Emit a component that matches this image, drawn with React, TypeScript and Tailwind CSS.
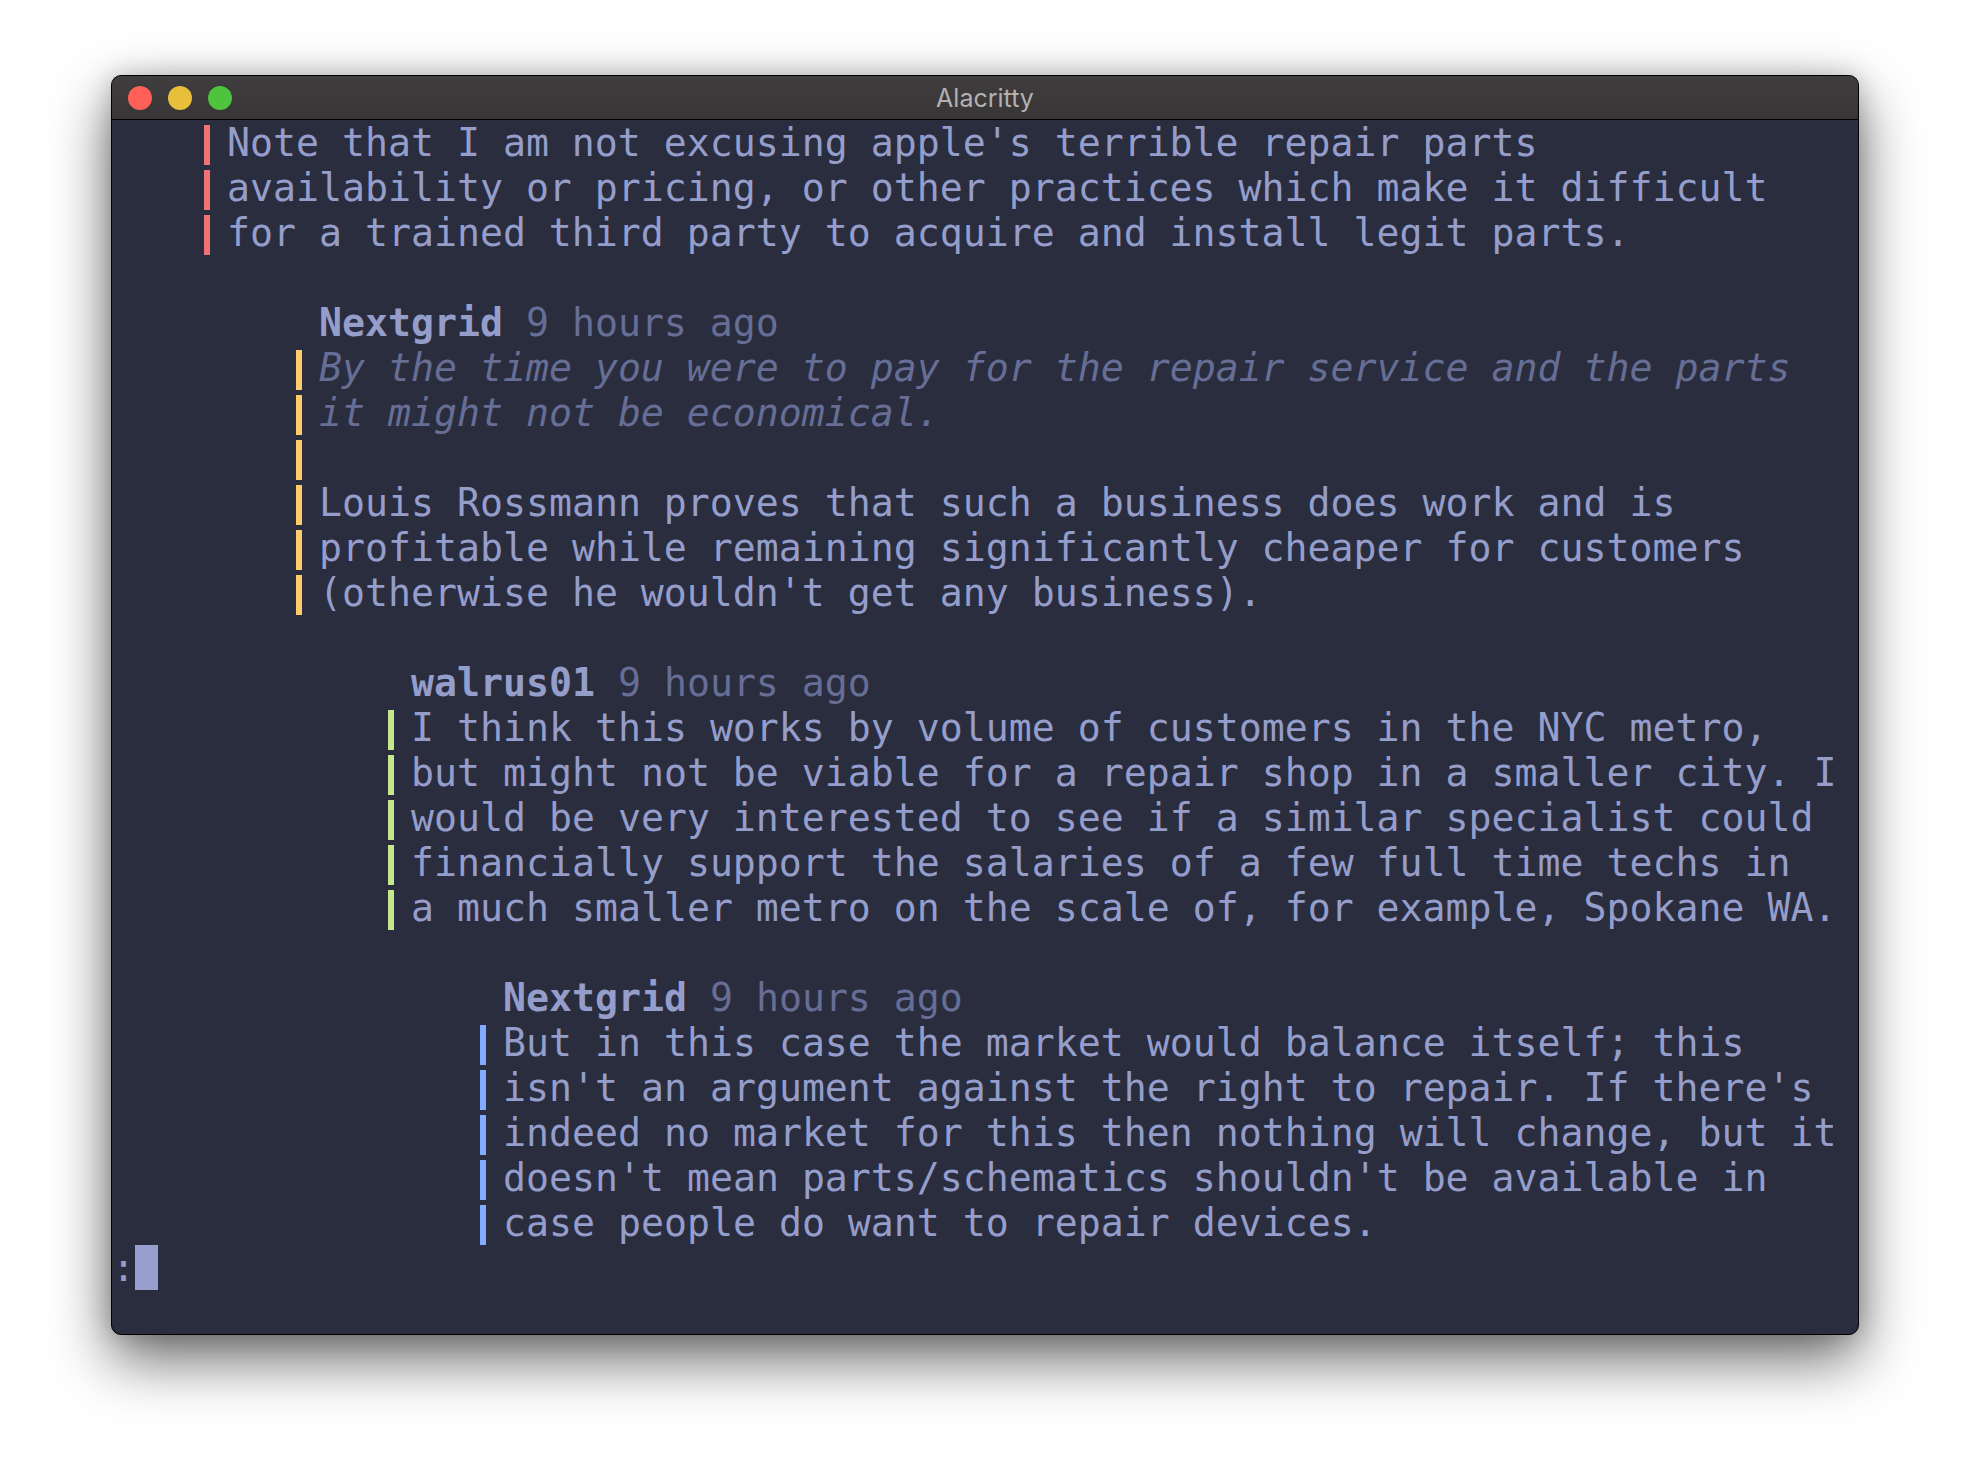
import { FC } from "react";

type Seg = { text: string; kind?: "bold" | "dim" | "italic" };

type Row = {
  indent?: number; // number of columns before the bar / text
  bar?: "red" | "yellow" | "green" | "blue";
  segs?: Seg[];
};

const indentClass: Record<number, string> = {
  0: "w-0",
  4: "w-[92px]",
  5: "w-[115px]",
  8: "w-[184px]",
  9: "w-[207px]",
  12: "w-[276px]",
  13: "w-[299px]",
  16: "w-[368px]",
  17: "w-[391px]",
};

const barColor: Record<string, string> = {
  red: "bg-[#f07178]",
  yellow: "bg-[#ffcb6b]",
  green: "bg-[#c3e88d]",
  blue: "bg-[#82aaff]",
};

const segClass: Record<string, string> = {
  normal: "text-[#959dcb]",
  bold: "text-[#959dcb] font-bold",
  dim: "text-[#676e95]",
  italic: "text-[#676e95] italic",
};

const header = (name: string, indent: number): Row => ({
  indent,
  segs: [{ text: name, kind: "bold" }, { text: " 9 hours ago", kind: "dim" }],
});

const body = (text: string, indent: number, bar: Row["bar"], italic = false): Row => ({
  indent,
  bar,
  segs: [{ text, kind: italic ? "italic" : undefined }],
});

const rows: Row[] = [
  body("Note that I am not excusing apple's terrible repair parts", 4, "red"),
  body("availability or pricing, or other practices which make it difficult", 4, "red"),
  body("for a trained third party to acquire and install legit parts.", 4, "red"),
  {},
  header("Nextgrid", 9),
  body("By the time you were to pay for the repair service and the parts", 8, "yellow", true),
  body("it might not be economical.", 8, "yellow", true),
  body("", 8, "yellow"),
  body("Louis Rossmann proves that such a business does work and is", 8, "yellow"),
  body("profitable while remaining significantly cheaper for customers", 8, "yellow"),
  body("(otherwise he wouldn't get any business).", 8, "yellow"),
  {},
  header("walrus01", 13),
  body("I think this works by volume of customers in the NYC metro,", 12, "green"),
  body("but might not be viable for a repair shop in a smaller city. I", 12, "green"),
  body("would be very interested to see if a similar specialist could", 12, "green"),
  body("financially support the salaries of a few full time techs in", 12, "green"),
  body("a much smaller metro on the scale of, for example, Spokane WA.", 12, "green"),
  {},
  header("Nextgrid", 17),
  body("But in this case the market would balance itself; this", 16, "blue"),
  body("isn't an argument against the right to repair. If there's", 16, "blue"),
  body("indeed no market for this then nothing will change, but it", 16, "blue"),
  body("doesn't mean parts/schematics shouldn't be available in", 16, "blue"),
  body("case people do want to repair devices.", 16, "blue"),
];

const TermRow: FC<{ row: Row }> = ({ row }) => (
  <div className="flex h-[45px] items-start">
    <div className={`${indentClass[row.indent ?? 0]} shrink-0`} />
    {row.bar && (
      <div className="w-[23px] shrink-0 h-[45px] pt-[5px]">
        <div className={`w-[6px] h-[40px] ${barColor[row.bar]}`} />
      </div>
    )}
    <p className="whitespace-pre leading-[45px] pt-[1px]">
      {row.segs?.map((s, i) => (
        <span key={i} className={segClass[s.kind ?? "normal"]}>
          {s.text}
        </span>
      ))}
    </p>
  </div>
);

const App: FC = () => {
  return (
    <div className="w-[1970px] h-[1482px] bg-white pl-[111px] pt-[75px] overflow-hidden">
      <div className="w-[1748px] h-[1260px] rounded-[10px] border border-black bg-[#292d3e] overflow-hidden flex flex-col shadow-[0_24px_60px_rgba(0,0,0,0.6),0_0_24px_rgba(0,0,0,0.18)]">
        {/* Title bar */}
        <div className="relative h-[44px] shrink-0 bg-gradient-to-b from-[#3f3d3e] to-[#373536] border-b border-black flex items-center pl-[16px] gap-[16px]">
          <span className="w-[24px] h-[24px] rounded-full bg-[#fe5f57]" />
          <span className="w-[24px] h-[24px] rounded-full bg-[#e7bf3b]" />
          <span className="w-[24px] h-[24px] rounded-full bg-[#4fc33d]" />
          <p className="absolute inset-0 flex items-center justify-center pt-[2px] text-[25px] text-[#b3b1b2] font-['Inter','Liberation_Sans',sans-serif]">
            Alacritty
          </p>
        </div>

        {/* Terminal grid */}
        <div className="flex-1 font-['DejaVu_Sans_Mono','Liberation_Mono',monospace] text-[38.2px]">
          {rows.map((r, i) => (
            <TermRow key={i} row={r} />
          ))}
          <div className="flex h-[45px] items-start">
            <p className="w-[23px] whitespace-pre leading-[45px] pt-[1px] text-[#959dcb]">:</p>
            <div className="w-[23px] h-[45px] bg-[#979fcf]" />
          </div>
        </div>
      </div>
    </div>
  );
};

export default App;
